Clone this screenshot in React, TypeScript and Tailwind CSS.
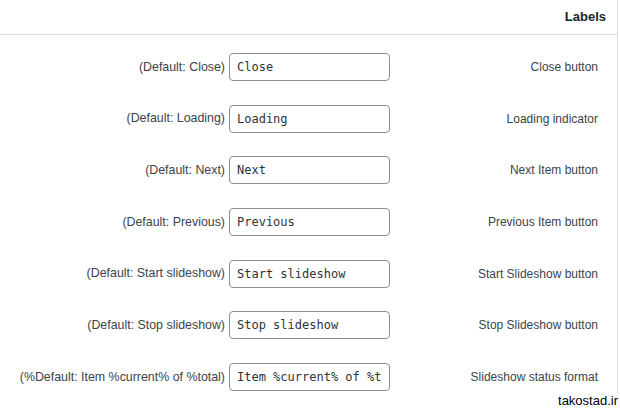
const rows = [
  { def: '(Default: Close)', value: 'Close', label: 'Close button' },
  { def: '(Default: Loading)', value: 'Loading', label: 'Loading indicator' },
  { def: '(Default: Next)', value: 'Next', label: 'Next Item button' },
  { def: '(Default: Previous)', value: 'Previous', label: 'Previous Item button' },
  { def: '(Default: Start slideshow)', value: 'Start slideshow', label: 'Start Slideshow button' },
  { def: '(Default: Stop slideshow)', value: 'Stop slideshow', label: 'Stop Slideshow button' },
  { def: '(%Default: Item %current% of %total)', value: 'Item %current% of %total', label: 'Slideshow status format' },
];

export default function App() {
  return (
    <div className="relative w-[620px] h-[408px] overflow-hidden bg-white font-['Liberation_Sans',Arial,sans-serif]">
      <div className="w-[618px] h-full border-r border-[#dcdcde]">
        <div className="h-[35px] border-b border-[#dcdcde] flex items-center justify-end pr-[11px] pb-[1px]">
          <h2 className="text-[13px] font-bold text-[#1d2327]">Labels</h2>
        </div>
        <div className="pt-[6px]">
          {rows.map((r) => (
            <div key={r.label} className="h-[51.7px] flex items-center">
              <div className="w-[390px] flex items-center justify-end gap-[4px]">
                <span className="text-[12.4px] text-[#3c434a] whitespace-nowrap">{r.def}</span>
                <input
                  readOnly
                  value={r.value}
                  className="w-[161px] h-[28px] px-[7px] border border-[#8c8f94] rounded-[4px] bg-white text-[12px] text-[#2c3338] font-['DejaVu_Sans_Mono',monospace] outline-none"
                />
              </div>
              <div className="w-[208px] text-right text-[12px] text-[#3c434a] whitespace-nowrap">{r.label}</div>
            </div>
          ))}
        </div>
      </div>
      <span className="absolute right-[2px] bottom-0 bg-white pl-[1px] text-[13px] leading-[15px] text-black">takostad.ir</span>
    </div>
  );
}
